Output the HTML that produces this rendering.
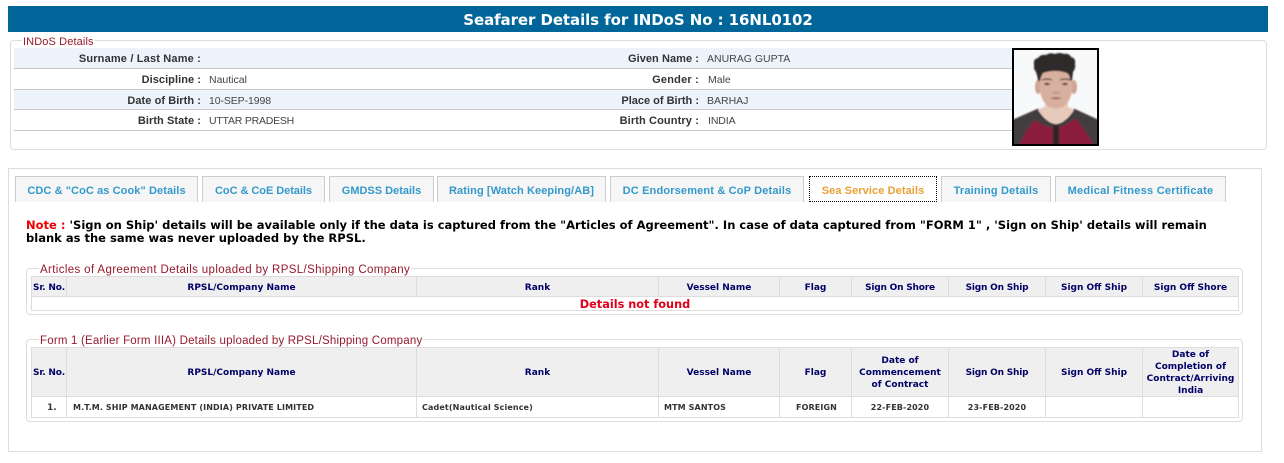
<!DOCTYPE html>
<html><head><meta charset="utf-8"><title>Seafarer Details</title>
<style>
html,body{margin:0;padding:0;background:#fff;width:1284px;height:463px;overflow:hidden}
body{position:relative;font-family:"Liberation Sans",Arial,sans-serif}
.a{position:absolute;white-space:nowrap}
#hd{left:8px;top:6px;width:1260px;height:26px;background:#006699;color:#fff;font:bold 15px/28px "DejaVu Sans",Verdana,sans-serif;text-align:center;letter-spacing:-.08px}
.fs{position:absolute;border:1px solid #ddd;border-radius:4px;box-sizing:border-box}
.lg{position:absolute;background:#fff;color:#961a2c;font-size:11.5px;line-height:12px;white-space:nowrap;padding:0 1px}
.row{position:absolute;left:14px;width:998px;box-sizing:border-box;border-bottom:1px solid #c8c8c8}
.b{background:#edf3fb}
.l{position:absolute;text-align:right;font-weight:bold;font-size:11px;color:#333;letter-spacing:.06px;line-height:14px;white-space:nowrap}
.v{position:absolute;font-size:10.5px;color:#444;line-height:14px;white-space:nowrap}
.tab{position:absolute;top:176px;height:26px;box-sizing:border-box;border:1px solid #ccc;border-bottom:0;background:#f6f6f6;color:#3399cc;font-size:11px;font-weight:bold;line-height:28px;text-align:center;white-space:nowrap}
.tab.on{background:#fff;color:#e8a033;border:1px dotted #000;height:26px}
#note{left:26px;top:219px;font:bold 11.5px/13px "DejaVu Sans",Verdana,sans-serif;color:#000;letter-spacing:.01px}
table{position:absolute;left:31px;border-collapse:collapse;table-layout:fixed;width:1208px;font-family:"DejaVu Sans",Verdana,sans-serif}
td,th{border:1px solid #ddd;padding:0;text-align:center;overflow:hidden}
th{background:#efefef;color:#000066;font-size:9px;font-weight:bold;line-height:12px}
th span{position:relative;top:1px;display:block}
td{font-size:8px;font-weight:bold;color:#333;line-height:12px;letter-spacing:.12px}
td span{position:relative;top:1px;display:block}
td.t{text-align:left;padding-left:5px}
.n{letter-spacing:-.2px}
</style></head><body>
<div id="hd" class="a">Seafarer Details for INDoS No : 16NL0102</div>

<div class="fs" style="left:10px;top:40px;width:1257px;height:110px"></div>
<div class="lg" style="left:22px;top:36px;font-size:11px;letter-spacing:.12px">INDoS Details</div>
<div class="row b" style="top:48px;height:21px"></div>
<div class="row" style="top:69px;height:21px"></div>
<div class="row b" style="top:90px;height:20px"></div>
<div class="row" style="top:110px;height:21px"></div>

<div class="l" style="right:1083px;top:52px;letter-spacing:.17px">Surname / Last Name :</div>
<div class="l" style="right:1083px;top:73px">Discipline :</div>
<div class="v" style="left:209px;top:73px">Nautical</div>
<div class="l" style="right:1083px;top:94px">Date of Birth :</div>
<div class="v" style="left:209px;top:94px;letter-spacing:-.1px">10-SEP-1998</div>
<div class="l" style="right:1083px;top:114px">Birth State :</div>
<div class="v" style="left:209px;top:114px;letter-spacing:-.22px">UTTAR PRADESH</div>
<div class="l" style="right:585px;top:52px">Given Name :</div>
<div class="v" style="left:707px;top:52px">ANURAG GUPTA</div>
<div class="l" style="right:585px;top:73px;letter-spacing:.2px">Gender :</div>
<div class="v" style="left:708px;top:73px">Male</div>
<div class="l" style="right:585px;top:94px;letter-spacing:0">Place of Birth :</div>
<div class="v" style="left:707px;top:94px">BARHAJ</div>
<div class="l" style="right:585px;top:114px;letter-spacing:.12px">Birth Country :</div>
<div class="v" style="left:708px;top:114px;letter-spacing:-.1px">INDIA</div>

<svg class="a" style="left:1012px;top:48px" width="87" height="98" viewBox="1012 48 87 98">
<defs><filter id="s" x="-5%" y="-5%" width="110%" height="110%"><feGaussianBlur stdDeviation=".7"/></filter><clipPath id="c"><rect x="1014" y="50" width="83" height="94"/></clipPath></defs>
<rect x="1012" y="48" width="87" height="98" fill="#000"/>
<rect x="1014" y="50" width="83" height="94" fill="#f7f9fb"/>
<g clip-path="url(#c)"><g filter="url(#s)">
<path d="M1012 120 L1037 109 L1075 109 L1099 120 V146 H1012Z" fill="#423d40"/>
<path d="M1045 98 H1068 V107 Q1074 109 1075 111 Q1066 123 1056 125 Q1046 123 1037 111 Q1040 108 1045 107Z" fill="#e6cabb"/>
<path d="M1019 146 Q1025 130 1035 120 Q1044 127 1053 127 V146Z" fill="#8b1f3c"/>
<path d="M1059 146 V127 Q1068 125 1075 118 Q1086 130 1094 146Z" fill="#8b1f3c"/>
<rect x="1053" y="125" width="6" height="21" fill="#2a2628"/>
<path d="M1037 110 Q1046 124 1056 125 Q1066 124 1075 110" fill="none" stroke="#2b2527" stroke-width="1.4"/>
<ellipse cx="1038" cy="87" rx="3" ry="7" fill="#cda597"/>
<ellipse cx="1074" cy="87" rx="3" ry="7" fill="#cda597"/>
<path d="M1040 72 Q1056 66 1072 72 L1072 92 Q1070 102 1063 107 Q1056 110 1049 107 Q1042 102 1040 92Z" fill="#d9b09f"/>
<path d="M1034 64 Q1033 59 1038 58 Q1041 54 1046 55 Q1050 52 1055 54 Q1060 52 1064 54 Q1069 53 1071 57 Q1076 58 1075 64 Q1076 68 1073 72 L1072 81 L1070 80 Q1070 75 1067 73 Q1055 69 1043 73 Q1041 76 1040 81 L1038 81 Q1037 72 1034 69Z" fill="#2f2a2c"/>
<path d="M1042 80 Q1047 78 1052 80 M1060 80 Q1065 78 1070 80" fill="none" stroke="#4a3230" stroke-width="1.2"/>
<ellipse cx="1047" cy="84" rx="2.8" ry="1.1" fill="#3a2a28"/>
<ellipse cx="1065" cy="84" rx="2.8" ry="1.1" fill="#3a2a28"/>
<path d="M1053 92 Q1056 94 1060 92" fill="none" stroke="#b08375" stroke-width="1.2"/>
<path d="M1050 98 Q1056 96 1062 98 Q1056 101 1050 98Z" fill="#a96f68"/>
</g></g>
</svg>

<div class="a" style="left:8px;top:168px;width:1254px;height:284px;border:1px solid #ddd;box-sizing:border-box"></div>

<div class="tab" style="left:15px;width:183px;letter-spacing:.09px">CDC &amp; "CoC as Cook" Details</div>
<div class="tab" style="left:202px;width:123px;letter-spacing:-.05px">CoC &amp; CoE Details</div>
<div class="tab" style="left:329px;width:105px;letter-spacing:0">GMDSS Details</div>
<div class="tab" style="left:437px;width:169px;letter-spacing:.1px">Rating [Watch Keeping/AB]</div>
<div class="tab" style="left:610px;width:194px;letter-spacing:.16px">DC Endorsement &amp; CoP Details</div>
<div class="tab on" style="left:809px;width:128px;letter-spacing:.09px">Sea Service Details</div>
<div class="tab" style="left:941px;width:110px;letter-spacing:.18px">Training Details</div>
<div class="tab" style="left:1055px;width:171px;letter-spacing:.26px">Medical Fitness Certificate</div>

<div id="note" class="a"><span style="color:#e00">Note :</span> 'Sign on Ship' details will be available only if the data is captured from the "Articles of Agreement". In case of data captured from "FORM 1" , 'Sign on Ship' details will remain<br>blank as the same was never uploaded by the RPSL.</div>

<div class="fs" style="left:26px;top:268px;width:1217px;height:47px"></div>
<div class="lg" style="left:39px;top:264px;letter-spacing:.365px">Articles of Agreement Details uploaded by RPSL/Shipping Company</div>
<table style="top:276px">
<colgroup><col style="width:35px"><col style="width:350px"><col style="width:242px"><col style="width:121px"><col style="width:72px"><col style="width:97px"><col style="width:97px"><col style="width:97px"><col style="width:96px"></colgroup>
<tr style="height:20px"><th><span class="n">Sr. No.</span></th><th><span>RPSL/Company Name</span></th><th><span>Rank</span></th><th><span>Vessel Name</span></th><th><span>Flag</span></th><th><span class="n">Sign On Shore</span></th><th><span class="n">Sign On Ship</span></th><th><span>Sign Off Ship</span></th><th><span>Sign Off Shore</span></th></tr>
<tr style="height:14px"><td colspan="9" style="color:#e0001b;font-size:11.3px;line-height:13px;letter-spacing:0"><span>Details not found</span></td></tr>
</table>

<div class="fs" style="left:26px;top:339px;width:1217px;height:83px"></div>
<div class="lg" style="left:39px;top:335px;letter-spacing:.2px">Form 1 (Earlier Form IIIA) Details uploaded by RPSL/Shipping Company</div>
<table style="top:347px">
<colgroup><col style="width:35px"><col style="width:350px"><col style="width:242px"><col style="width:121px"><col style="width:72px"><col style="width:97px"><col style="width:97px"><col style="width:97px"><col style="width:96px"></colgroup>
<tr style="height:49px"><th><span class="n">Sr. No.</span></th><th><span>RPSL/Company Name</span></th><th><span>Rank</span></th><th><span>Vessel Name</span></th><th><span>Flag</span></th><th><span>Date of<br>Commencement<br>of Contract</span></th><th><span class="n">Sign On Ship</span></th><th><span>Sign Off Ship</span></th><th><span>Date of<br>Completion of<br>Contract/Arriving<br>India</span></th></tr>
<tr style="height:21px"><td><span style="left:3px;font-size:8.5px">1.</span></td><td class="t"><span style="left:1px">M.T.M. SHIP MANAGEMENT (INDIA) PRIVATE LIMITED</span></td><td class="t"><span>Cadet(Nautical Science)</span></td><td class="t"><span>MTM SANTOS</span></td><td><span style="left:1px">FOREIGN</span></td><td><span>22-FEB-2020</span></td><td><span>23-FEB-2020</span></td><td></td><td></td></tr>
</table>
</body></html>
